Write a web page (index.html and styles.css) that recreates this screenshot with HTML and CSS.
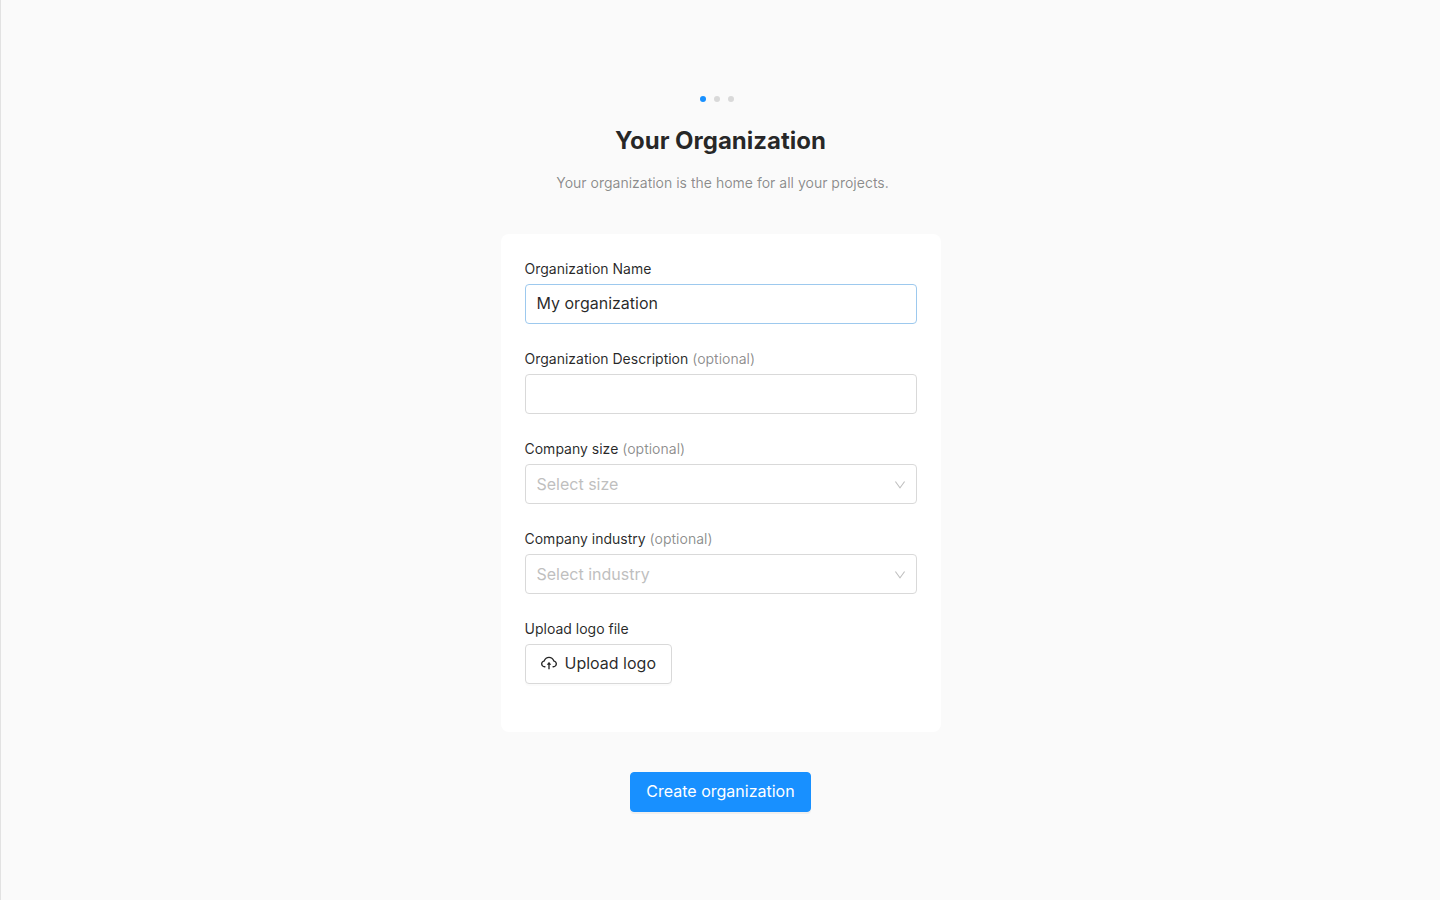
FILE: index.html
```html
<!DOCTYPE html>
<html lang="en">
<head>
<meta charset="utf-8">
<meta name="viewport" content="width=device-width, initial-scale=1">
<title>Your Organization</title>
<link rel="stylesheet" href="styles.css">
</head>
<body>
<main class="page">
  <form class="setup">
    <div class="steps" aria-hidden="true">
      <span class="step step-active"></span>
      <span class="step"></span>
      <span class="step"></span>
    </div>
    <h1 class="title">Your Organization</h1>
    <p class="subtitle">Your organization is the home for all your projects.</p>
    <div class="card">
      <div class="field">
        <label class="label" for="org-name">Organization Name</label>
        <input class="control control-active" id="org-name" type="text" value="My organization">
      </div>
      <div class="field">
        <label class="label" for="org-description">Organization Description <span class="optional">(optional)</span></label>
        <input class="control" id="org-description" type="text">
      </div>
      <div class="field">
        <label class="label" for="company-size">Company size <span class="optional">(optional)</span></label>
        <div class="select-box">
          <select class="control select" id="company-size"><option>Select size</option></select>
          <svg class="chevron" viewBox="64 64 896 896" aria-hidden="true"><path d="M884 256h-75c-5.1 0-9.9 2.5-12.9 6.6L512 654.2 227.9 262.6c-3-4.1-7.8-6.6-12.9-6.6h-75c-6.5 0-10.3 7.4-6.5 12.7l352.6 486.1c12.8 17.6 39 17.6 51.7 0l352.6-486.1c3.9-5.3.1-12.7-6.4-12.7z"/></svg>
        </div>
      </div>
      <div class="field">
        <label class="label" for="company-industry">Company industry <span class="optional">(optional)</span></label>
        <div class="select-box">
          <select class="control select" id="company-industry"><option>Select industry</option></select>
          <svg class="chevron" viewBox="64 64 896 896" aria-hidden="true"><path d="M884 256h-75c-5.1 0-9.9 2.5-12.9 6.6L512 654.2 227.9 262.6c-3-4.1-7.8-6.6-12.9-6.6h-75c-6.5 0-10.3 7.4-6.5 12.7l352.6 486.1c12.8 17.6 39 17.6 51.7 0l352.6-486.1c3.9-5.3.1-12.7-6.4-12.7z"/></svg>
        </div>
      </div>
      <div class="field">
        <label class="label" for="upload-logo">Upload logo file</label>
        <button class="button" id="upload-logo" type="button">
          <svg class="upload-icon" viewBox="64 64 896 896" aria-hidden="true"><path d="M518.3 459a8 8 0 00-12.6 0l-112 141.7a7.98 7.98 0 006.3 12.9h73.9V856c0 4.4 3.6 8 8 8h60c4.4 0 8-3.6 8-8V613.7H624c6.7 0 10.4-7.7 6.3-12.9L518.3 459z"/><path d="M811.4 366.7C765.6 245.9 648.9 160 512.2 160S258.8 245.8 213 366.6C127.3 389.1 64 467.2 64 560c0 110.5 89.5 200 199.9 200H304c4.4 0 8-3.6 8-8v-60c0-4.4-3.6-8-8-8h-40.1c-33.7 0-65.4-13.4-89-37.7-23.5-24.2-36-56.8-34.9-90.6.9-26.4 9.9-51.2 26.2-72.1 16.7-21.3 40.1-36.8 66.1-43.7l37.9-9.9 13.9-36.6c8.6-22.8 20.6-44.1 35.7-63.4a245.6 245.6 0 0152.4-49.9c41.1-28.9 89.5-44.2 140-44.2s98.9 15.3 140 44.2c19.9 14 37.5 30.8 52.4 49.9 15.1 19.3 27.1 40.7 35.7 63.4l13.8 36.5 37.8 10C846.1 454.5 884 503.8 884 560c0 33.1-12.9 64.3-36.3 87.7a123.07 123.07 0 01-87.6 36.3H720c-4.4 0-8 3.6-8 8v60c0 4.4 3.6 8 8 8h40.1C870.5 760 960 670.5 960 560c0-92.7-63.1-170.7-148.6-193.3z"/></svg>
          <span>Upload logo</span>
        </button>
      </div>
    </div>
    <button class="button button-primary" type="submit">Create organization</button>
  </form>
</main>
</body>
</html>
```
FILE: styles.css
```css
* {
  box-sizing: border-box;
}

body {
  margin: 0;
  background: #fafafa;
  color: rgba(0, 0, 0, 0.85);
  font-family: Inter, "Liberation Sans", sans-serif;
  font-size: 14px;
  line-height: 22px;
}

.page {
  display: flex;
  align-items: center;
  justify-content: center;
  min-height: 100vh;
  border-left: 1px solid #e2e2e2;
}

.setup {
  display: flex;
  flex-direction: column;
  align-items: center;
  width: 100%;
  max-width: 440px;
}

.steps {
  display: flex;
  align-items: center;
  height: 22px;
}

.step {
  width: 6px;
  height: 6px;
  margin-right: 8px;
  border-radius: 50%;
  background: #d9d9d9;
}

.step-active {
  background: #1890ff;
}

.title {
  margin: 15px 0;
  font-size: 24px;
  font-weight: 700;
  line-height: 32px;
}

.subtitle {
  margin: 0 0 40px;
  padding-left: 4px;
  color: rgba(0, 0, 0, 0.45);
}

.card {
  width: 100%;
  margin-bottom: 40px;
  padding: 24px;
  border-radius: 8px;
  background: #fff;
}

.field {
  display: flex;
  flex-direction: column;
  align-items: flex-start;
  gap: 4px;
  margin-bottom: 24px;
}

.optional {
  color: rgba(0, 0, 0, 0.45);
}

.control {
  width: 100%;
  height: 40px;
  padding: 0 11px 2px;
  border: 1px solid #d9d9d9;
  border-radius: 4px;
  outline: none;
  background: #fff;
  color: rgba(0, 0, 0, 0.85);
  font: inherit;
  font-size: 16px;
}

.control-active,
.control:focus {
  border-color: #9dc9ee;
}

.select-box {
  position: relative;
  width: 100%;
}

.select {
  display: block;
  padding-bottom: 0;
  appearance: none;
  color: #bfbfbf;
}

.chevron {
  position: absolute;
  top: 15px;
  right: 11px;
  width: 12px;
  height: 12px;
  fill: #bfbfbf;
  pointer-events: none;
}

.button {
  display: flex;
  align-items: center;
  justify-content: center;
  gap: 8px;
  height: 40px;
  padding: 0 15px 2px;
  border: 1px solid #d9d9d9;
  border-radius: 4px;
  background: #fff;
  box-shadow: 0 2px 0 rgba(0, 0, 0, 0.016);
  color: rgba(0, 0, 0, 0.85);
  font: inherit;
  font-size: 16px;
  cursor: pointer;
}

.button-primary {
  border-color: #1890ff;
  background: #1890ff;
  box-shadow: 0 2px 0 rgba(0, 0, 0, 0.043);
  color: #fff;
}

.upload-icon {
  width: 16px;
  height: 16px;
  fill: currentColor;
}
```
